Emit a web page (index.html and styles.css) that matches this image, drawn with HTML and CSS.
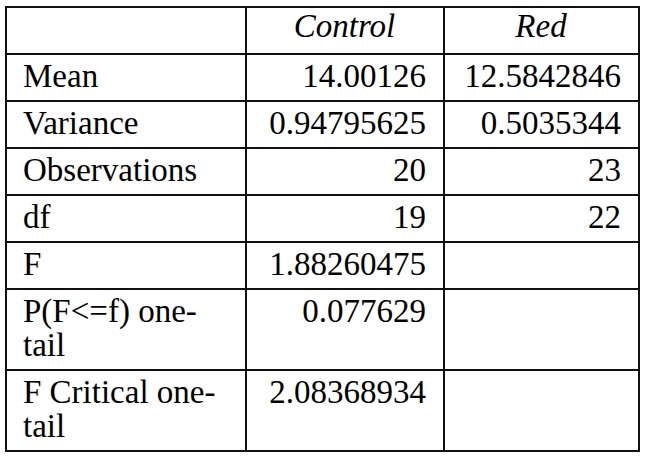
FILE: index.html
```html
<!DOCTYPE html>
<html lang="en">
<head>
  <meta charset="utf-8">
  <title>F-Test: Control vs Red</title>
  <link rel="stylesheet" href="styles.css">
</head>
<body>
  <div class="sheet">
    <table class="ftest">
      <colgroup>
        <col class="col-label">
        <col class="col-control">
        <col class="col-red">
      </colgroup>
      <tr class="head">
        <td></td>
        <td>Control</td>
        <td>Red</td>
      </tr>
      <tr>
        <td>Mean</td>
        <td class="num">14.00126</td>
        <td class="num">12.5842846</td>
      </tr>
      <tr>
        <td>Variance</td>
        <td class="num">0.94795625</td>
        <td class="num">0.5035344</td>
      </tr>
      <tr>
        <td>Observations</td>
        <td class="num">20</td>
        <td class="num">23</td>
      </tr>
      <tr>
        <td>df</td>
        <td class="num">19</td>
        <td class="num">22</td>
      </tr>
      <tr>
        <td>F</td>
        <td class="num">1.88260475</td>
        <td></td>
      </tr>
      <tr>
        <td>P(F&lt;=f) one-tail</td>
        <td class="num">0.077629</td>
        <td></td>
      </tr>
      <tr>
        <td>F Critical one-tail</td>
        <td class="num">2.08368934</td>
        <td></td>
      </tr>
    </table>
  </div>
</body>
</html>
```

FILE: styles.css
```css
html, body {
  font-family: "Times New Roman", "Liberation Serif", serif;
}

body {
  margin: 0;
  background: #fff;
  color: #000;
}

.sheet {
  padding: 6px 0 0 5px;
}

.ftest {
  border-collapse: collapse;
  table-layout: fixed;
  width: 633px;
}

.col-label {
  width: 240px;
}

.col-control {
  width: 198px;
}

.col-red {
  width: 195px;
}

td {
  font-family: "Times New Roman", "Liberation Serif", serif;
  font-size: 33px;
  line-height: 34px;
  border: 2px solid #111;
  padding: 4px 17px 7px 16px;
  vertical-align: top;
}

.head td {
  font-style: italic;
  text-align: center;
  padding-top: 1px;
  padding-bottom: 10px;
}

td.num {
  text-align: right;
}
```
